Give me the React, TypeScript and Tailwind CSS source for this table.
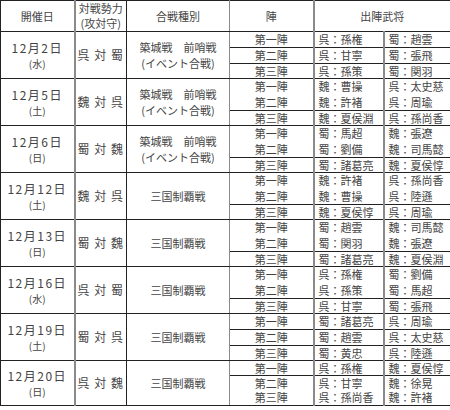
import React from 'react';

type Row = { jin: string; a: string; b: string };
type Day = {
  date: string;
  dow: string;
  match: string;
  event: boolean;
  lines: [boolean, boolean];
  rows: Row[];
};

const days: Day[] = [
  {
    date: '12月2日', dow: '(水)', match: '呉 対 蜀', event: true, lines: [true, true],
    rows: [
      { jin: '第一陣', a: '呉：孫権', b: '蜀：趙雲' },
      { jin: '第二陣', a: '呉：甘寧', b: '蜀：張飛' },
      { jin: '第三陣', a: '呉：孫策', b: '蜀：関羽' },
    ],
  },
  {
    date: '12月5日', dow: '(土)', match: '魏 対 呉', event: true, lines: [false, true],
    rows: [
      { jin: '第一陣', a: '魏：曹操', b: '呉：太史慈' },
      { jin: '第二陣', a: '魏：許褚', b: '呉：周瑜' },
      { jin: '第三陣', a: '魏：夏侯淵', b: '呉：孫尚香' },
    ],
  },
  {
    date: '12月6日', dow: '(日)', match: '蜀 対 魏', event: true, lines: [false, true],
    rows: [
      { jin: '第一陣', a: '蜀：馬超', b: '魏：張遼' },
      { jin: '第二陣', a: '蜀：劉備', b: '魏：司馬懿' },
      { jin: '第三陣', a: '蜀：諸葛亮', b: '魏：夏侯惇' },
    ],
  },
  {
    date: '12月12日', dow: '(土)', match: '魏 対 呉', event: false, lines: [false, true],
    rows: [
      { jin: '第一陣', a: '魏：許褚', b: '呉：孫尚香' },
      { jin: '第二陣', a: '魏：曹操', b: '呉：陸遜' },
      { jin: '第三陣', a: '魏：夏侯惇', b: '呉：周瑜' },
    ],
  },
  {
    date: '12月13日', dow: '(日)', match: '蜀 対 魏', event: false, lines: [false, true],
    rows: [
      { jin: '第一陣', a: '蜀：趙雲', b: '魏：司馬懿' },
      { jin: '第二陣', a: '蜀：関羽', b: '魏：張遼' },
      { jin: '第三陣', a: '蜀：諸葛亮', b: '魏：夏侯淵' },
    ],
  },
  {
    date: '12月16日', dow: '(水)', match: '呉 対 蜀', event: false, lines: [false, true],
    rows: [
      { jin: '第一陣', a: '呉：孫権', b: '蜀：劉備' },
      { jin: '第二陣', a: '呉：孫策', b: '蜀：馬超' },
      { jin: '第三陣', a: '呉：甘寧', b: '蜀：張飛' },
    ],
  },
  {
    date: '12月19日', dow: '(土)', match: '蜀 対 呉', event: false, lines: [true, true],
    rows: [
      { jin: '第一陣', a: '蜀：諸葛亮', b: '呉：周瑜' },
      { jin: '第二陣', a: '蜀：趙雲', b: '呉：太史慈' },
      { jin: '第三陣', a: '蜀：黄忠', b: '呉：陸遜' },
    ],
  },
  {
    date: '12月20日', dow: '(日)', match: '呉 対 魏', event: false, lines: [true, false],
    rows: [
      { jin: '第一陣', a: '呉：孫権', b: '魏：夏侯惇' },
      { jin: '第二陣', a: '呉：甘寧', b: '魏：徐晃' },
      { jin: '第三陣', a: '呉：孫尚香', b: '魏：許褚' },
    ],
  },
];

const font = { fontFamily: '"Noto Sans CJK JP", "Noto Sans", sans-serif' };

export default function App() {
  return (
    <div className="w-[450px] h-[410px] bg-white" style={font}>
      <table className="w-[450px] table-fixed border-collapse text-[11px] leading-none text-[#444]">
        <colgroup>
          <col className="w-[74px]" />
          <col className="w-[52px]" />
          <col className="w-[103px]" />
          <col className="w-[84px]" />
          <col className="w-[70px]" />
          <col className="w-[67px]" />
        </colgroup>
        <thead>
          <tr className="h-[31px]">
            <th className="border border-[#222] border-r-2 border-r-[#8a8a8a] font-normal">開催日</th>
            <th className="border border-[#222] font-normal leading-[15px]">
              <div>対戦勢力</div>
              <div>(攻対守)</div>
            </th>
            <th className="border border-[#222] border-r-[#8a8a8a] font-normal">合戦種別</th>
            <th className="border border-[#222] border-r-2 border-r-[#8a8a8a] font-normal">陣</th>
            <th colSpan={2} className="border border-[#222] font-normal">出陣武将</th>
          </tr>
        </thead>
        <tbody>
          {days.map((d, di) =>
            d.rows.map((r, i) => {
              const bottom =
                i === 2 || d.lines[i] ? 'border-b border-b-[#222]' : 'border-b-0';
              const last = di === days.length - 1;
              const h = last ? 'h-[15px]' : i === 2 ? 'h-[15px]' : 'h-[16px]';
              return (
                <tr key={d.date + r.jin} className={h}>
                  {i === 0 && (
                    <>
                      <td
                        rowSpan={3}
                        className="border border-[#222] border-r-2 border-r-[#8a8a8a] text-center"
                      >
                        <div className="text-[12px] tracking-[1.5px] leading-[17px]">{d.date}</div>
                        <div className="text-[10px] leading-[15px]">{d.dow}</div>
                      </td>
                      <td rowSpan={3} className="border border-[#222] text-center text-[12px] tracking-[1px]">
                        {d.match}
                      </td>
                      <td rowSpan={3} className="border border-[#222] border-r-[#8a8a8a] text-center">
                        {d.event ? (
                          <div className="leading-[16px]">
                            <div>築城戦　前哨戦</div>
                            <div>(イベント合戦)</div>
                          </div>
                        ) : (
                          '三国制覇戦'
                        )}
                      </td>
                    </>
                  )}
                  <td className={`border-x border-x-[#8a8a8a] border-r-2 text-center ${bottom}`}>{r.jin}</td>
                  <td className={`border-r-2 border-r-[#8a8a8a] pl-[4px] whitespace-nowrap ${bottom}`}>{r.a}</td>
                  <td className={`border-r border-r-[#222] pl-[4px] whitespace-nowrap ${bottom}`}>{r.b}</td>
                </tr>
              );
            })
          )}
        </tbody>
      </table>
    </div>
  );
}
